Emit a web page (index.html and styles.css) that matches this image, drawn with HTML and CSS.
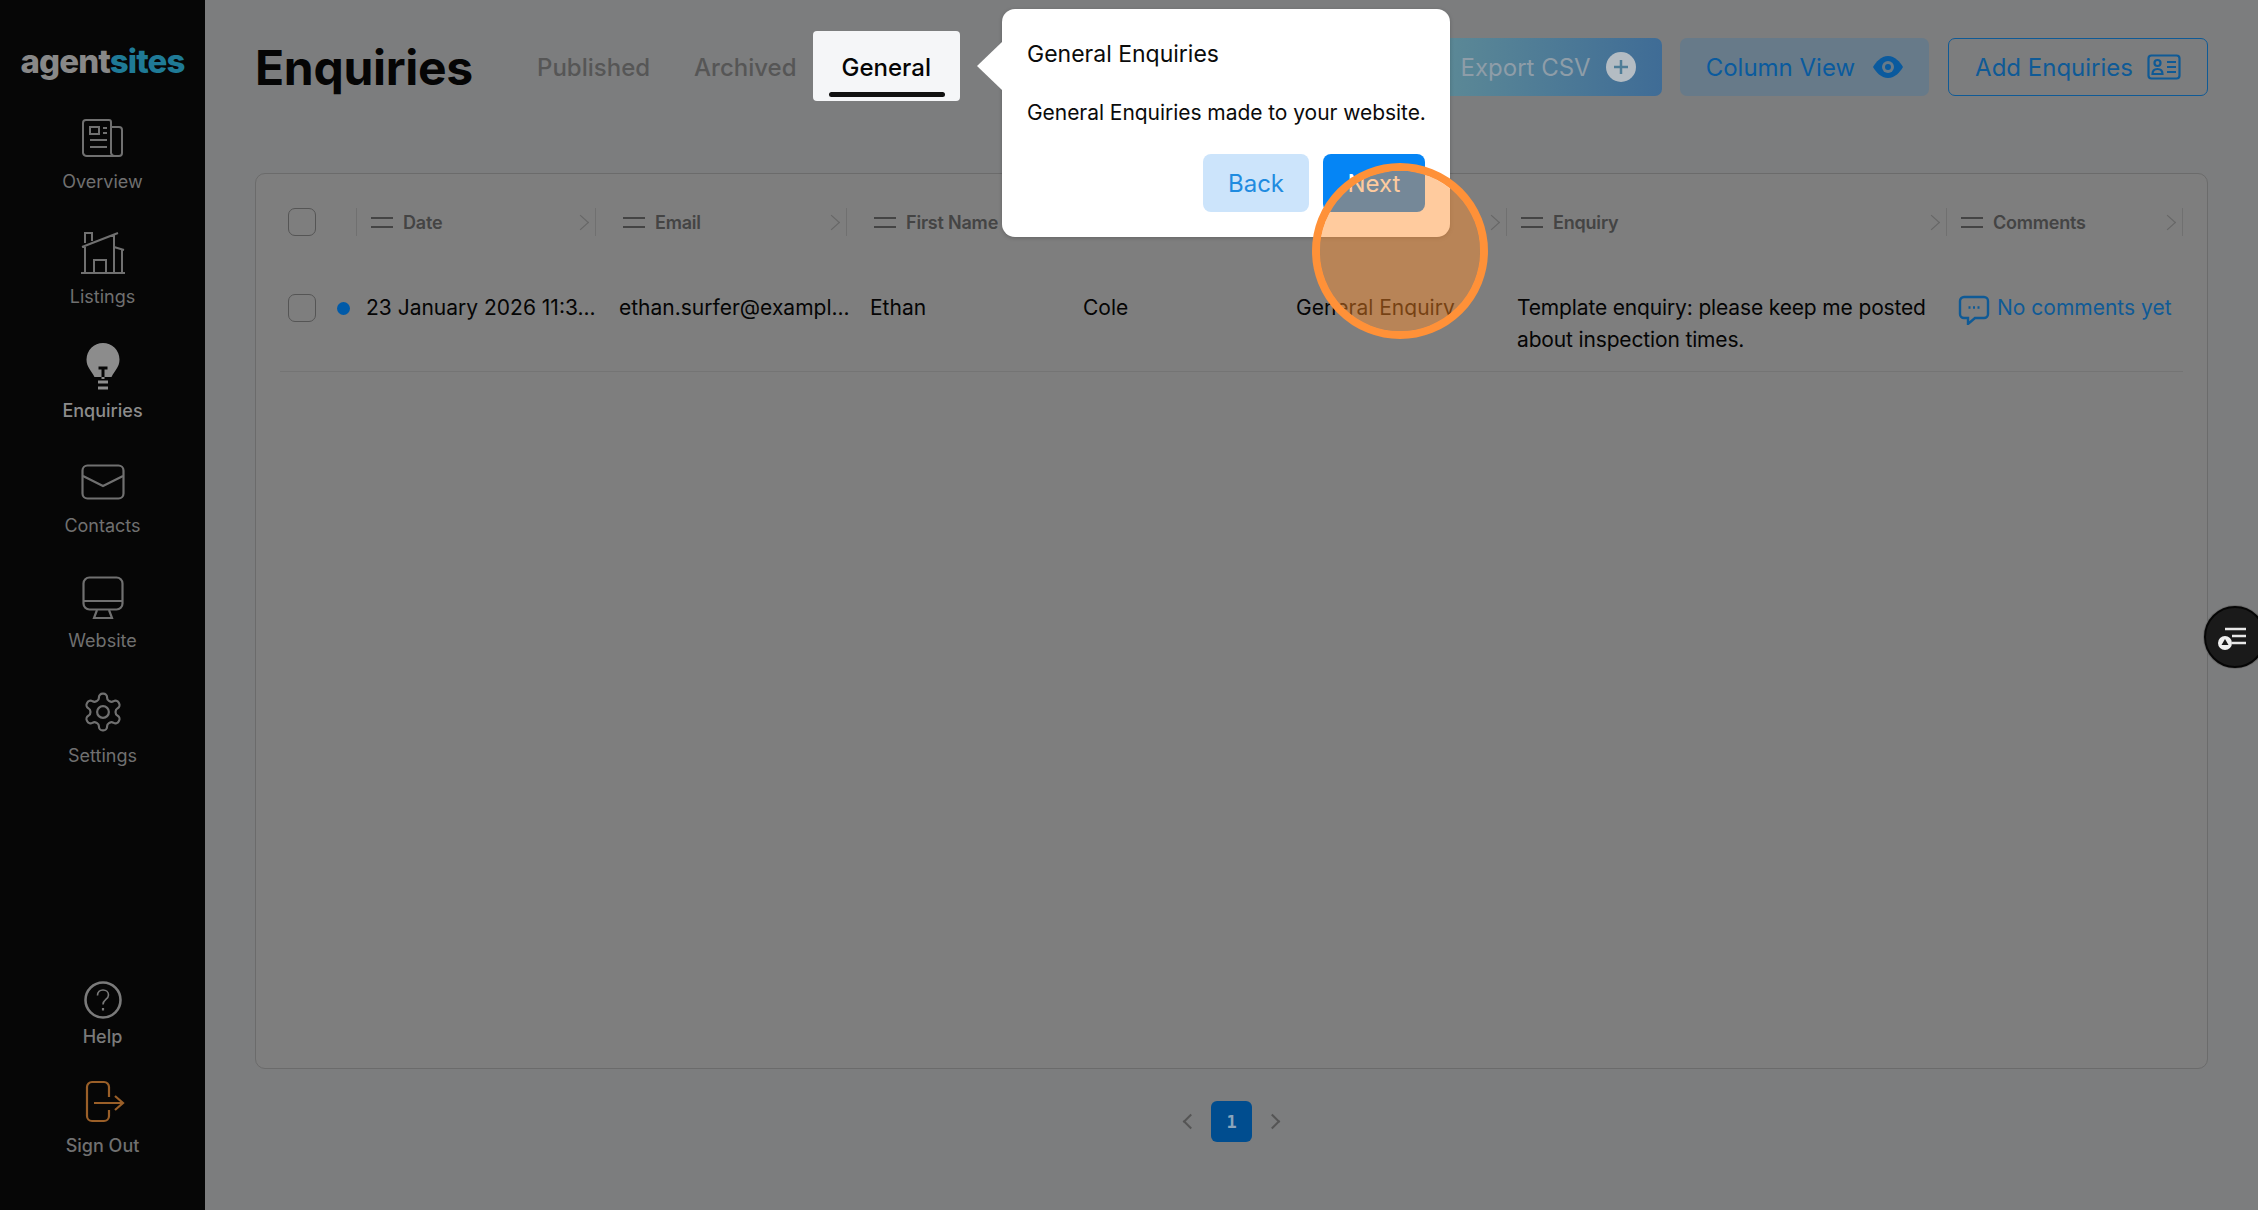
FILE: index.html
```html
<!DOCTYPE html>
<html lang="en">

<head>
  <meta charset="utf-8">
  <meta name="viewport" content="width=device-width, initial-scale=1">
  <title>Enquiries</title>
  <link rel="stylesheet" href="styles.css">
</head>

<body>
  <aside class="sidebar">
    <div class="logo"><span class="logo-agent">agent</span><span class="logo-sites">sites</span></div>

    <nav class="nav">
      <a class="nav-item">
        <span class="nav-icon">
          <svg width="42" height="40" viewBox="0 0 42 40" fill="none" stroke="currentColor" stroke-width="2">
            <path d="M4 2h23a2 2 0 0 1 2 2v31a4 4 0 0 0 4 3H5a4 4 0 0 1-4-3V5a3 3 0 0 1 3-3z"/>
            <path d="M29 9h8a3 3 0 0 1 3 3v23a3 3 0 0 1-3 3h-4"/>
            <path d="M8 9h9v7H8zM21 10h4M21 15h4M8 22h17M8 29h17"/>
          </svg>
        </span>
        <span class="nav-label">Overview</span>
      </a>
      <a class="nav-item">
        <span class="nav-icon">
          <svg width="44" height="43" viewBox="0 0 44 43" fill="none" stroke="currentColor" stroke-width="2">
            <path d="M0 41h44M1 15L37 1M4 13V41M4 11V1h7v8M33 3V41M33 15l10 3M41 18V41M13 41V28h12v13"/>
          </svg>
        </span>
        <span class="nav-label">Listings</span>
      </a>
      <a class="nav-item nav-item-active">
        <span class="nav-icon">
          <svg width="34" height="50" viewBox="0 0 34 50">
            <path fill="currentColor" d="M17 1a16.500 16.500 0 0 1 16.500 16.500c0 8-5 11-8 17.500h-17c-3-6.500-8-9.500-8-17.500A16.500 16.500 0 0 1 17 1z"/>
            <path fill="none" stroke="#060606" stroke-width="3" d="M12.500 26h9M17 26v9"/>
            <path fill="none" stroke="currentColor" stroke-width="3" d="M17 35v2M12 40h10M12 46h10"/>
          </svg>
        </span>
        <span class="nav-label">Enquiries</span>
      </a>
      <a class="nav-item">
        <span class="nav-icon">
          <svg width="44" height="36" viewBox="0 0 44 36" fill="none" stroke="currentColor" stroke-width="2.200">
            <rect x="1.500" y="1.500" width="41" height="33" rx="5"/>
            <path d="M2 12l20 10 20-10"/>
          </svg>
        </span>
        <span class="nav-label">Contacts</span>
      </a>
      <a class="nav-item">
        <span class="nav-icon">
          <svg width="42" height="43" viewBox="0 0 42 43" fill="none" stroke="currentColor" stroke-width="2.200">
            <rect x="1.500" y="1.500" width="39" height="32" rx="6"/>
            <path d="M1.500 25h39M15 34l-3 8h18l-3-8"/>
          </svg>
        </span>
        <span class="nav-label">Website</span>
      </a>
      <a class="nav-item">
        <span class="nav-icon">
          <svg width="44" height="44" viewBox="0 0 24 24" fill="none" stroke="currentColor" stroke-width="1.200">
            <path d="M12.220 2h-.44a2 2 0 0 0-2 2v.18a2 2 0 0 1-1 1.730l-.43.25a2 2 0 0 1-2 0l-.15-.08a2 2 0 0 0-2.730.73l-.22.38a2 2 0 0 0 .73 2.730l.15.1a2 2 0 0 1 1 1.720v.51a2 2 0 0 1-1 1.740l-.15.09a2 2 0 0 0-.73 2.730l.22.38a2 2 0 0 0 2.730.73l.15-.08a2 2 0 0 1 2 0l.43.25a2 2 0 0 1 1 1.730V20a2 2 0 0 0 2 2h.44a2 2 0 0 0 2-2v-.18a2 2 0 0 1 1-1.730l.43-.25a2 2 0 0 1 2 0l.15.08a2 2 0 0 0 2.730-.73l.22-.39a2 2 0 0 0-.73-2.730l-.15-.08a2 2 0 0 1-1-1.740v-.5a2 2 0 0 1 1-1.740l.15-.09a2 2 0 0 0 .73-2.730l-.22-.38a2 2 0 0 0-2.730-.73l-.15.08a2 2 0 0 1-2 0l-.43-.25a2 2 0 0 1-1-1.730V4a2 2 0 0 0-2-2z"/>
            <circle cx="12" cy="12" r="3.200"/>
          </svg>
        </span>
        <span class="nav-label">Settings</span>
      </a>
    </nav>

    <nav class="nav-bottom">
      <a class="nav-item nav-item-help">
        <span class="nav-icon">
          <svg width="38" height="38" viewBox="0 0 38 38" fill="none" stroke="currentColor">
            <circle cx="19" cy="19" r="17.500" stroke-width="2.600"/>
            <path stroke-width="1.600" d="M13.500 14.500c0-3.500 2.500-5.500 5.500-5.500s5.500 2 5.500 5c0 4.500-5.500 4.500-5.500 9.500"/>
            <path stroke-width="2.200" d="M19 27v2.500"/>
          </svg>
        </span>
        <span class="nav-label">Help</span>
      </a>
      <a class="nav-item nav-item-signout">
        <span class="nav-icon">
          <svg class="signout-icon" width="40" height="43" viewBox="0 0 40 43" fill="none" stroke="currentColor" stroke-width="2.200">
            <path d="M24 17V7a5 5 0 0 0-5-5H7a5 5 0 0 0-5 5v29a5 5 0 0 0 5 5h12a5 5 0 0 0 5-5v-6"/>
            <path d="M9 23h29M30 16l8 7-8 7"/>
          </svg>
        </span>
        <span class="nav-label">Sign Out</span>
      </a>
    </nav>
  </aside>

  <main class="main">
    <header class="page-header">
      <h1 class="page-title">Enquiries</h1>
      <div class="tabs">
        <a class="tab">Published</a>
        <a class="tab">Archived</a>
        <a class="tab tab-active">General</a>
      </div>
      <div class="actions">
        <a class="btn btn-export">Export CSV
          <svg width="30" height="30" viewBox="0 0 30 30">
            <circle cx="15" cy="15" r="15" fill="#b4bcc3"/>
            <path d="M15 8v14M8 15h14" stroke="#4f7d97" stroke-width="2.500"/>
          </svg>
        </a>
        <a class="btn btn-column">Column View
          <svg width="30" height="24" viewBox="0 0 30 24">
            <path fill="#0a5a9e" d="M15 1c7 0 12 6 15 11-3 5-8 11-15 11S3 17 0 12C3 7 8 1 15 1z"/>
            <circle cx="15" cy="12" r="6" fill="#677a89"/>
            <circle cx="15" cy="12" r="3" fill="#0a5a9e"/>
          </svg>
        </a>
        <a class="btn btn-add">Add Enquiries
          <svg width="34" height="26" viewBox="0 0 34 26" fill="none" stroke="#0f5a96" stroke-width="2.200">
            <rect x="1.500" y="1.500" width="31" height="23" rx="3"/>
            <circle cx="10.500" cy="9" r="3"/>
            <path d="M5.500 20c0-3.500 2-5 5-5s5 1.500 5 5zM20 8h9M20 13h9M20 18h9"/>
          </svg>
        </a>
      </div>
    </header>

    <section class="table-card">
      <div class="table-row table-head">
        <div class="head-check"><span class="checkbox"></span></div>
        <div class="head-cell"><span class="menu-icon"></span><span class="head-text">Date</span><span class="chevron"></span></div>
        <div class="head-cell head-cell-wide"><span class="menu-icon"></span><span class="head-text">Email</span><span class="chevron"></span></div>
        <div class="head-cell head-cell-wide"><span class="menu-icon"></span><span class="head-text">First Name</span><span class="chevron"></span></div>
        <div class="head-cell head-cell-wide"><span class="menu-icon"></span><span class="head-text">Last Name</span><span class="chevron"></span></div>
        <div class="head-cell head-cell-wide"><span class="menu-icon"></span><span class="head-text">Enquiry Type</span><span class="chevron"></span></div>
        <div class="head-cell"><span class="menu-icon"></span><span class="head-text">Enquiry</span><span class="chevron"></span></div>
        <div class="head-cell"><span class="menu-icon"></span><span class="head-text">Comments</span><span class="chevron"></span></div>
      </div>

      <div class="table-row table-body-row">
        <div class="body-check"><span class="checkbox"></span><span class="unread-dot"></span></div>
        <div class="cell cell-date">23 January 2026 11:3...</div>
        <div class="cell cell-wide">ethan.surfer@exampl...</div>
        <div class="cell cell-wide">Ethan</div>
        <div class="cell cell-wide">Cole</div>
        <div class="cell cell-wide cell-clip">General Enquiry</div>
        <div class="cell cell-enquiry">Template enquiry: please keep me posted about inspection times.</div>
        <div class="cell cell-comments">
          <svg width="32" height="30" viewBox="0 0 32 30" fill="none" stroke="#0f5a96" stroke-width="2.400">
            <path d="M6 2h20a4 4 0 0 1 4 4v13a4 4 0 0 1-4 4H17l-7 6v-6H6a4 4 0 0 1-4-4V6a4 4 0 0 1 4-4z"/>
            <path stroke-width="2.400" d="M10.500 12.500h2M15 12.500h2M19.500 12.500h2"/>
          </svg>
          <span>No comments yet</span>
        </div>
      </div>
    </section>

    <div class="pagination">
      <span class="page-arrow page-arrow-left"></span>
      <span class="page-current">1</span>
      <span class="page-arrow page-arrow-right"></span>
    </div>
  </main>

  <!-- product tour step -->
  <div class="tour-popover">
    <div class="tour-title">General Enquiries</div>
    <div class="tour-text">General Enquiries made to your website.</div>
    <div class="tour-buttons">
      <a class="tour-btn tour-back">Back</a>
      <a class="tour-btn tour-next">Next</a>
    </div>
  </div>
  <div class="tour-pulse"></div>

  <a class="float-btn">
    <svg width="28" height="24" viewBox="0 0 28 24">
      <path d="M7 2h21M14 9h14M14 16h14" stroke="#e8e8e8" stroke-width="2.400"/>
      <circle cx="7" cy="16" r="7" fill="#f0f0f0"/>
      <path d="M7 12l3.500 6h-7z" fill="#1a1a1a"/>
    </svg>
  </a>
</body>

</html>
```

FILE: styles.css
```css
* {
  box-sizing: border-box;
}

html,
body {
  height: 100%;
}

body {
  margin: 0;
  display: flex;
  overflow: hidden;
  background-color: #7c7d7e;
  color: #050505;
  font-family: Inter, "Liberation Sans", sans-serif;
}

/* sidebar */
.sidebar {
  width: 205px;
  flex-shrink: 0;
  display: flex;
  flex-direction: column;
  background-color: #060606;
  color: #707070;
  padding-bottom: 52px;
}

.logo {
  height: 114px;
  padding-top: 39px;
  text-align: center;
  font-size: 33px;
  line-height: 44px;
  font-weight: 800;
  letter-spacing: -0.9px;
}

.logo-agent {
  color: #888888;
}

.logo-sites {
  color: #1f7a96;
}

.nav {
  display: flex;
  flex-direction: column;
  gap: 35px;
}

.nav-bottom {
  margin-top: auto;
  display: flex;
  flex-direction: column;
  gap: 28px;
}

.nav-item {
  display: flex;
  flex-direction: column;
  align-items: center;
  gap: 8px;
}

.nav-icon {
  height: 48px;
  display: flex;
  align-items: center;
  justify-content: center;
}

.nav-label {
  font-size: 18px;
  line-height: 24px;
}

.nav-item-active {
  margin-top: -1px;
  color: #8c8c8c;
}

.nav-item-active .nav-label {
  font-weight: 500;
}

.nav-item-help {
  gap: 1px;
  color: #7a7a7a;
}

.nav-item-help .nav-label {
  font-weight: 500;
}

.nav-item-signout {
  gap: 9px;
}

.nav-item-signout .nav-label {
  font-weight: 500;
}

.signout-icon {
  color: #9a5f28;
  margin-left: 4px;
}

/* main */
.main {
  flex: 1;
  padding: 31px 50px 0;
  min-width: 0;
}

.page-header {
  display: flex;
  align-items: center;
  height: 70px;
}

.page-title {
  width: 282px;
  margin: 0;
  padding-top: 3px;
  font-size: 48px;
  line-height: 70px;
  font-weight: 700;
  letter-spacing: -0.3px;
}

.tabs {
  display: flex;
  align-items: center;
  gap: 44px;
  padding-top: 2px;
}

.tab {
  font-size: 24px;
  color: #565656;
  font-weight: 500;
}

.tab-active {
  position: relative;
  height: 70px;
  line-height: 74px;
  margin-top: -2px;
  margin-left: -28px;
  padding: 0 29px;
  background-color: #f5f6f8;
  border-radius: 4px;
  color: #050505;
}

.tab-active::after {
  content: '';
  position: absolute;
  left: 16px;
  right: 15px;
  bottom: 4px;
  height: 5px;
  border-radius: 3px;
  background-color: #111111;
}

.actions {
  margin-left: auto;
  margin-top: 2px;
  display: flex;
  gap: 18px;
}

.btn {
  height: 58px;
  display: flex;
  align-items: center;
  gap: 18px;
  padding: 0 26px;
  border-radius: 7px;
  font-size: 24px;
  white-space: nowrap;
}

.btn-export {
  gap: 15px;
  background: linear-gradient(to right, #5d8a96, #3f6c96);
  color: #8e9da8;
}

.btn-column {
  background-color: #677a89;
  color: #0a5a9e;
}

.btn-add {
  margin-left: 1px;
  gap: 14px;
  border: 1px solid #0f5a96;
  color: #0f5a96;
}

/* table */
.table-card {
  height: 896px;
  margin-top: 72px;
  padding: 34px 24px 0;
  background-color: #7e7e7e;
  border: 1px solid #6b6b6b;
  border-radius: 10px;
}

.table-row {
  display: grid;
  grid-template-columns: 76px 239px 251px 213px 213px 234px 440px 237px;
}

.table-head {
  height: 84px;
  align-items: start;
}

.head-check {
  height: 28px;
  padding-left: 8px;
}

.checkbox {
  display: block;
  width: 28px;
  height: 28px;
  border: 1px solid #555555;
  border-radius: 7px;
}

.head-cell {
  height: 28px;
  display: flex;
  align-items: center;
  padding-left: 14px;
  padding-right: 6px;
  border-left: 1px solid #707070;
  font-size: 18px;
  font-weight: 600;
  letter-spacing: -0.2px;
  color: #444444;
  white-space: nowrap;
}

.head-cell-wide {
  padding-left: 27px;
}

.head-cell:last-child {
  border-right: 1px solid #707070;
}

.menu-icon {
  width: 22px;
  height: 11px;
  flex-shrink: 0;
  margin-right: 10px;
  border-top: 2px solid #444444;
  border-bottom: 2px solid #444444;
}

.head-text {
  flex: 1;
  overflow: hidden;
}

.chevron {
  width: 11px;
  height: 11px;
  flex-shrink: 0;
  margin-right: 3px;
  border-top: 1px solid #666666;
  border-right: 1px solid #666666;
  transform: scaleX(1.1) rotate(45deg);
}

.table-body-row {
  padding-bottom: 15px;
  border-bottom: 1px solid #747474;
  font-size: 21px;
  line-height: 32px;
}

.body-check {
  display: flex;
  align-items: center;
  height: 32px;
  padding-left: 8px;
}

.unread-dot {
  width: 13px;
  height: 13px;
  margin-left: 21px;
  border-radius: 50%;
  background-color: #005aa8;
}

.cell {
  white-space: nowrap;
}

.cell-date {
  padding-left: 10px;
}

.cell-wide {
  padding-left: 24px;
}

.cell-clip {
  height: 25px;
  overflow: hidden;
}

.cell-enquiry {
  padding-left: 11px;
  white-space: normal;
  letter-spacing: -0.15px;
}

.cell-comments {
  display: flex;
  align-items: flex-start;
  gap: 7px;
  padding-left: 12px;
  color: #0f5a96;
}

.cell-comments svg {
  margin-top: 3px;
  flex-shrink: 0;
}

/* pagination */
.pagination {
  margin-top: 32px;
  display: flex;
  justify-content: center;
  align-items: center;
  gap: 15px;
}

.page-current {
  width: 41px;
  height: 41px;
  display: flex;
  align-items: center;
  justify-content: center;
  border-radius: 6px;
  background-color: #004d8f;
  color: #8aa5bc;
  font-family: "DejaVu Sans Mono", monospace;
  font-size: 17px;
  font-weight: 700;
}

.page-arrow {
  width: 11px;
  height: 11px;
  border-top: 2px solid #555555;
  border-right: 2px solid #555555;
}

.page-arrow-left {
  transform: rotate(-135deg);
}

.page-arrow-right {
  transform: rotate(45deg);
}

/* tour popover */
.tour-popover {
  position: absolute;
  top: 9px;
  left: 1002px;
  width: 448px;
  height: 228px;
  padding: 0 25px;
  background-color: #ffffff;
  border-radius: 13px;
  box-shadow: 0 1px 4px rgba(0, 0, 0, 0.2);
  color: #0b0b0b;
}

.tour-popover::before {
  content: '';
  position: absolute;
  top: 33px;
  left: -25px;
  border-top: 24px solid transparent;
  border-bottom: 24px solid transparent;
  border-right: 25px solid #ffffff;
}

.tour-title {
  margin-top: 30px;
  font-size: 23px;
  line-height: 30px;
}

.tour-text {
  margin-top: 29px;
  font-size: 21px;
  line-height: 30px;
  letter-spacing: -0.05px;
  white-space: nowrap;
}

.tour-buttons {
  margin-top: 26px;
  display: flex;
  justify-content: flex-end;
  gap: 14px;
}

.tour-btn {
  height: 58px;
  display: flex;
  align-items: center;
  justify-content: center;
  border-radius: 8px;
  font-size: 24px;
}

.tour-back {
  width: 106px;
  background-color: #cce4fb;
  color: #1f8be0;
}

.tour-next {
  width: 102px;
  background-color: #0585f5;
  color: #ffffff;
}

.tour-pulse {
  position: absolute;
  top: 163px;
  left: 1312px;
  width: 176px;
  height: 176px;
  border: 8px solid #ff9138;
  border-radius: 50%;
  background-color: rgba(255, 140, 40, 0.45);
  background-clip: padding-box;
}

.float-btn {
  position: fixed;
  top: 606px;
  left: 2204px;
  width: 62px;
  height: 62px;
  display: flex;
  align-items: center;
  padding-left: 12px;
  padding-top: 3px;
  border: 2px solid #050505;
  border-radius: 50%;
  background-color: #1a1a1a;
  box-shadow: 0 0 0 1px #6a6a6a;
}
```
